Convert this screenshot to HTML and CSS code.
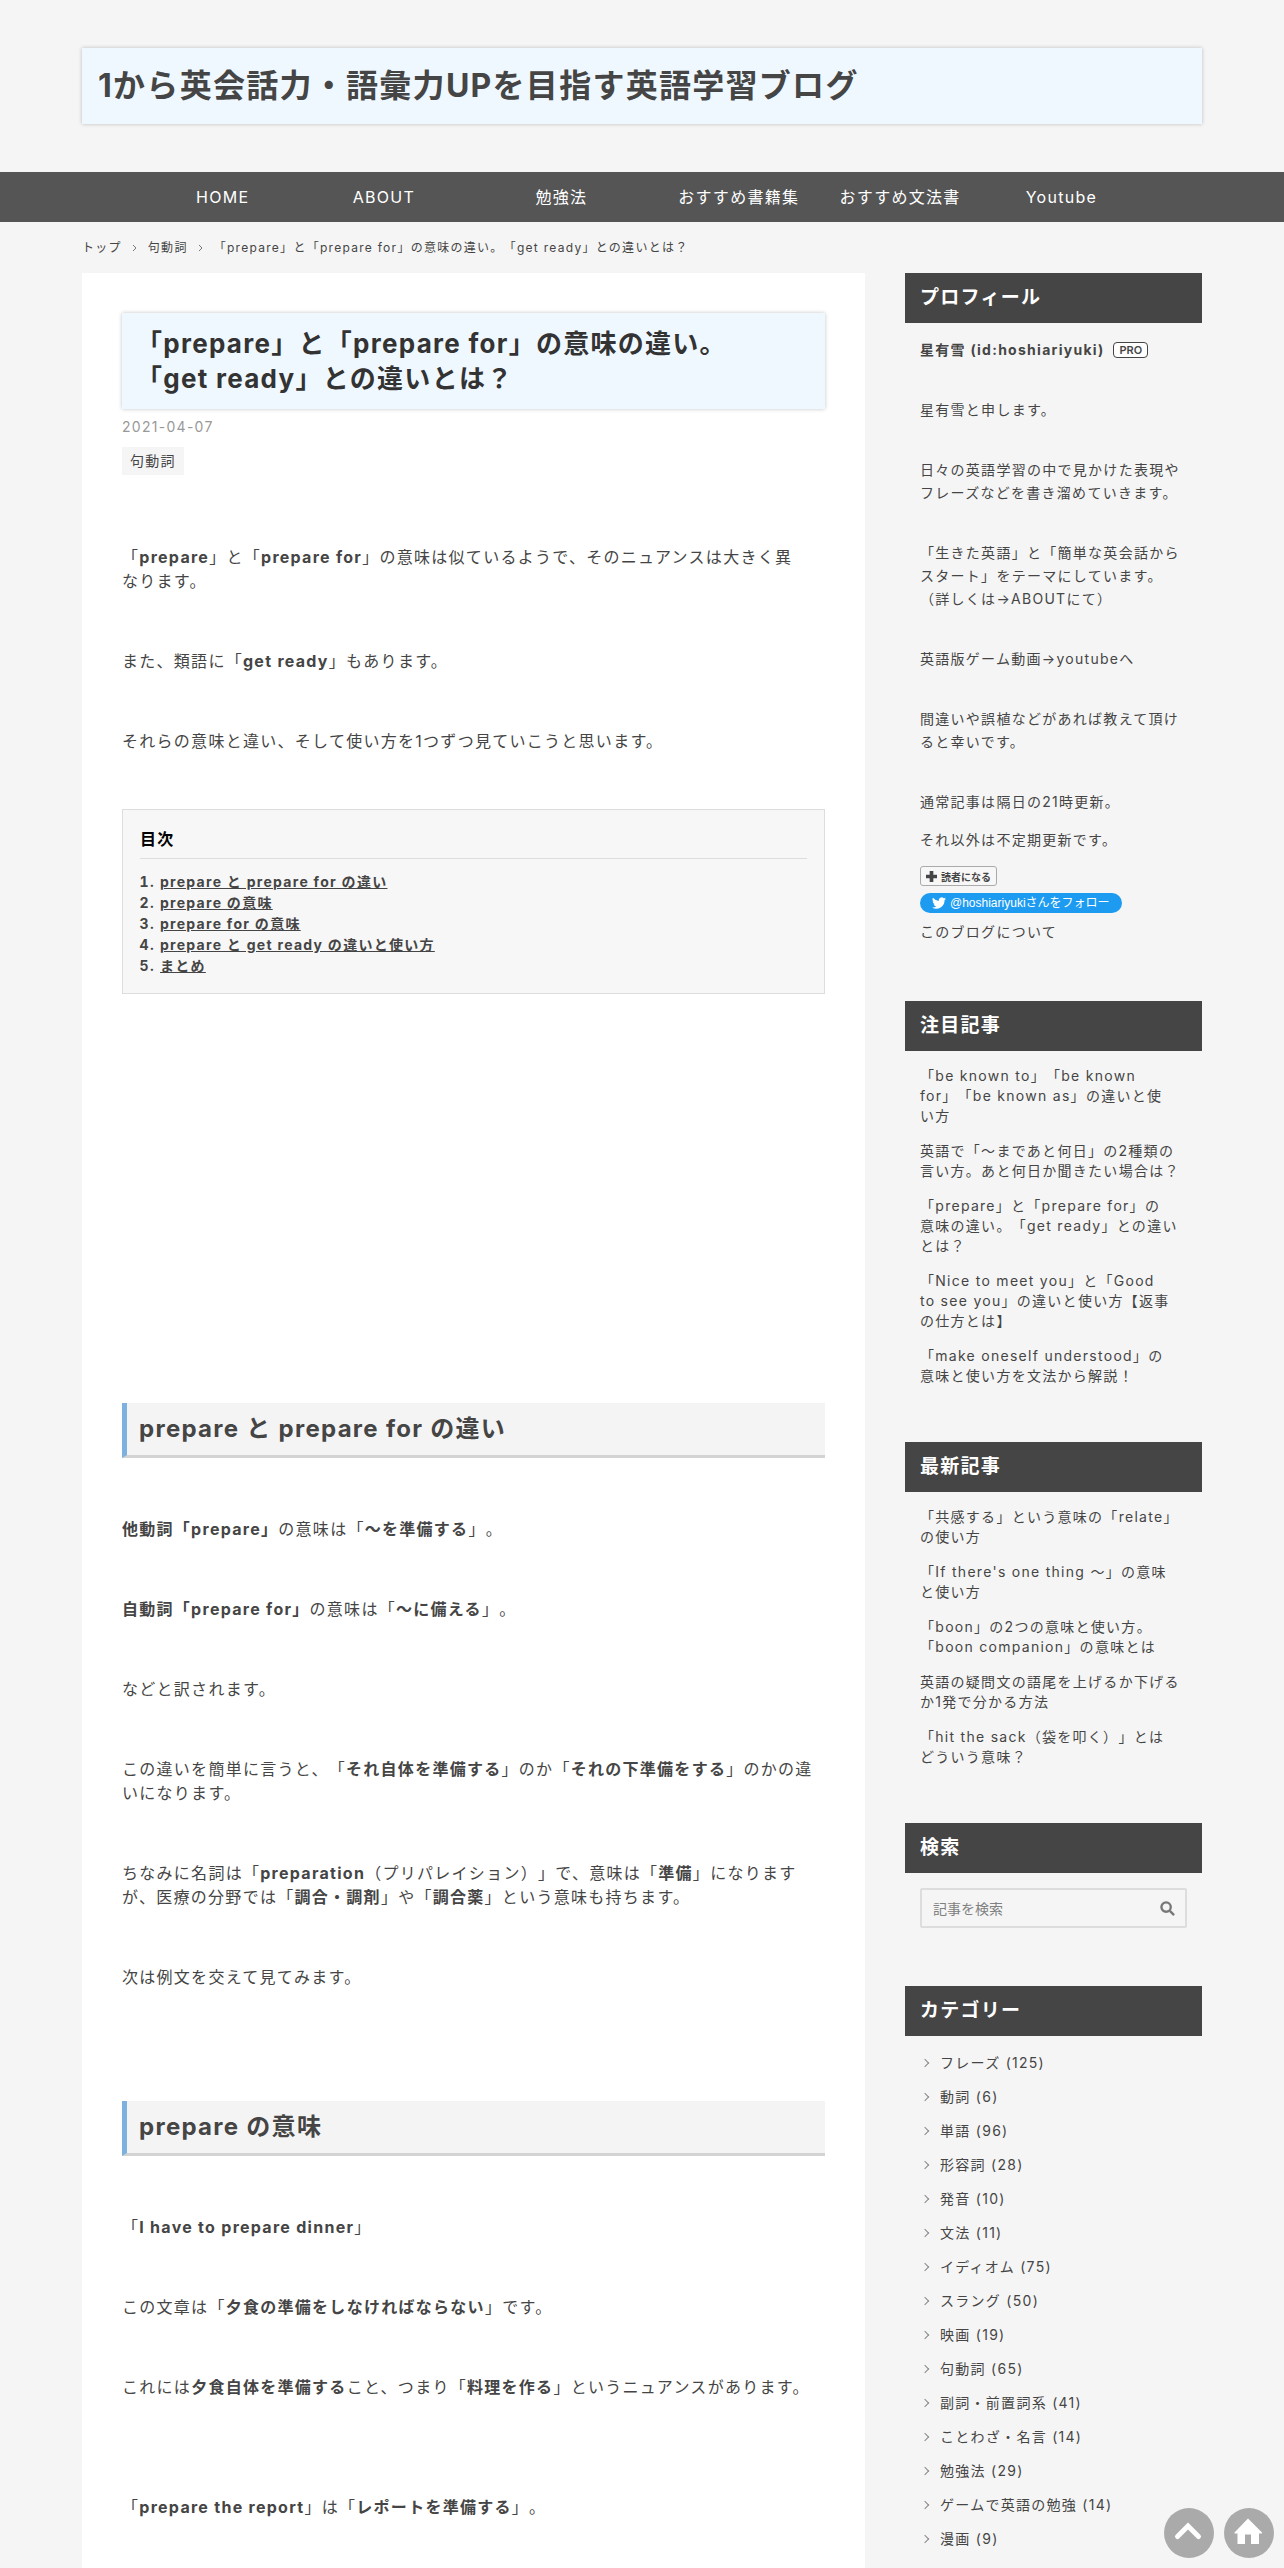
FILE: index.html
```html
<!DOCTYPE html>
<html lang="ja">
<head>
  <meta charset="UTF-8" />
  <title>「prepare」と「prepare for」の意味の違い。「get ready」との違いとは？</title>
  <meta name="viewport" content="width=device-width, initial-scale=1.0" />
  <link rel="stylesheet" href="styles.css">
</head>
<body>

<header class="blog-header">
  <div class="container">
    <div class="blog-title"><a href="#">1から英会話力・語彙力UPを目指す英語学習ブログ</a></div>
  </div>
</header>

<nav class="global-nav">
  <ul>
    <li><a href="#">HOME</a></li>
    <li><a href="#">ABOUT</a></li>
    <li class="wide"><a href="#">勉強法</a></li>
    <li><a href="#">おすすめ書籍集</a></li>
    <li><a href="#">おすすめ文法書</a></li>
    <li><a href="#">Youtube</a></li>
  </ul>
</nav>

<div class="container breadcrumb">
  <a href="#">トップ</a>
  <svg class="chevron" viewBox="0 0 6 8"><path d="M1 1l3 3-3 3" /></svg>
  <a href="#">句動詞</a>
  <svg class="chevron" viewBox="0 0 6 8"><path d="M1 1l3 3-3 3" /></svg>
  <span>「prepare」と「prepare for」の意味の違い。「get ready」との違いとは？</span>
</div>

<div class="container content">
  <main class="entry">
    <h1 class="entry-title"><a href="#">「prepare」と「prepare for」の意味の違い。<br>「get ready」との違いとは？</a></h1>
    <time class="entry-date" datetime="2021-04-07">2021-04-07</time>
    <div class="entry-categories"><a href="#">句動詞</a></div>

    <div class="entry-content">
      <p>「<strong>prepare</strong>」と「<strong>prepare for</strong>」の意味は似ているようで、そのニュアンスは大きく異<br>なります。</p>
      <p>また、類語に「<strong>get ready</strong>」もあります。</p>
      <p>それらの意味と違い、そして使い方を1つずつ見ていこうと思います。</p>

      <div class="toc">
        <p class="toc-title">目次</p>
        <ol>
          <li><a href="#s1">prepare と prepare for の違い</a></li>
          <li><a href="#s2">prepare の意味</a></li>
          <li><a href="#">prepare for の意味</a></li>
          <li><a href="#">prepare と get ready の違いと使い方</a></li>
          <li><a href="#">まとめ</a></li>
        </ol>
      </div>

      <div class="ad-space"></div>

      <h2 id="s1">prepare と prepare for の違い</h2>
      <p><strong>他動詞「prepare」</strong>の意味は「<strong>～を準備する</strong>」。</p>
      <p><strong>自動詞「prepare for」</strong>の意味は「<strong>～に備える</strong>」。</p>
      <p>などと訳されます。</p>
      <p>この違いを簡単に言うと、「<strong>それ自体を準備する</strong>」のか「<strong>それの下準備をする</strong>」のかの違いになります。</p>
      <p>ちなみに名詞は「<strong>preparation</strong>（プリパレイション）」で、意味は「<strong>準備</strong>」になりますが、医療の分野では「<strong>調合・調剤</strong>」や「<strong>調合薬</strong>」という意味も持ちます。</p>
      <p>次は例文を交えて見てみます。</p>

      <h2 id="s2">prepare の意味</h2>
      <p>「<strong>I have to prepare dinner</strong>」</p>
      <p>この文章は「<strong>夕食の準備をしなければならない</strong>」です。</p>
      <p>これには<strong>夕食自体を準備する</strong>こと、つまり「<strong>料理を作る</strong>」というニュアンスがあります。</p>
      <p class="spaced">「<strong>prepare the report</strong>」は「<strong>レポートを準備する</strong>」。</p>
    </div>
  </main>

  <aside class="sidebar">
    <section class="module">
      <h3>プロフィール</h3>
      <div class="module-body profile">
        <div class="profile-id"><a href="#">星有雪 (id:hoshiariyuki)</a><a class="pro" href="#">PRO</a></div>
        <p>星有雪と申します。</p>
        <p>日々の英語学習の中で見かけた表現やフレーズなどを書き溜めていきます。</p>
        <p>「生きた英語」と「簡単な英会話からスタート」をテーマにしています。<br>（詳しくは→<a href="#">ABOUT</a>にて）</p>
        <p>英語版ゲーム動画→<a href="#">youtube</a>へ</p>
        <p>間違いや誤植などがあれば教えて頂けると幸いです。</p>
        <p>通常記事は隔日の21時更新。</p>
        <p class="near">それ以外は不定期更新です。</p>
        <button class="subscribe" type="button"><svg viewBox="0 0 12 12"><path d="M4 0h4v4h4v4H8v4H4V8H0V4h4z" /></svg>読者になる</button>
        <a class="twitter" href="#"><svg viewBox="0 0 24 24"><path d="M24 4.6a10 10 0 0 1-2.8.8 5 5 0 0 0 2.1-2.7 10 10 0 0 1-3.1 1.2 4.9 4.9 0 0 0-8.4 4.5A14 14 0 0 1 1.7 3.1a4.9 4.9 0 0 0 1.5 6.6 5 5 0 0 1-2.2-.6v.1a4.9 4.9 0 0 0 3.9 4.8 5 5 0 0 1-2.2.1 4.9 4.9 0 0 0 4.6 3.4A9.9 9.9 0 0 1 0 19.5 14 14 0 0 0 7.5 21.7c9.1 0 14-7.5 14-14v-.6A10 10 0 0 0 24 4.6z" /></svg>@hoshiariyukiさんをフォロー</a>
        <a class="about" href="#">このブログについて</a>
      </div>
    </section>

    <section class="module">
      <h3>注目記事</h3>
      <ul class="module-body entries">
        <li><a href="#">「be known to」「be known<br>for」「be known as」の違いと使<br>い方</a></li>
        <li><a href="#">英語で「～まであと何日」の2種類の言い方。あと何日か聞きたい場合は？</a></li>
        <li><a href="#">「prepare」と「prepare for」の<br>意味の違い。「get ready」との違い<br>とは？</a></li>
        <li><a href="#">「Nice to meet you」と「Good<br>to see you」の違いと使い方【返事<br>の仕方とは】</a></li>
        <li><a href="#">「make oneself understood」の<br>意味と使い方を文法から解説！</a></li>
      </ul>
    </section>

    <section class="module">
      <h3>最新記事</h3>
      <ul class="module-body entries">
        <li><a href="#">「共感する」という意味の「relate」の使い方</a></li>
        <li><a href="#">「If there's one thing ～」の意味<br>と使い方</a></li>
        <li><a href="#">「boon」の2つの意味と使い方。<br>「boon companion」の意味とは</a></li>
        <li><a href="#">英語の疑問文の語尾を上げるか下げるか1発で分かる方法</a></li>
        <li><a href="#">「hit the sack（袋を叩く）」とは<br>どういう意味？</a></li>
      </ul>
    </section>

    <section class="module">
      <h3>検索</h3>
      <div class="module-body">
        <form class="search">
          <input type="text" placeholder="記事を検索" aria-label="記事を検索">
          <button type="submit" aria-label="検索"><svg viewBox="0 0 16 16"><circle cx="6.5" cy="6.5" r="5" /><path d="M10.5 10.5L15 15" /></svg></button>
        </form>
      </div>
    </section>

    <section class="module">
      <h3>カテゴリー</h3>
      <ul class="module-body categories">
        <li><a href="#">フレーズ (125)</a></li>
        <li><a href="#">動詞 (6)</a></li>
        <li><a href="#">単語 (96)</a></li>
        <li><a href="#">形容詞 (28)</a></li>
        <li><a href="#">発音 (10)</a></li>
        <li><a href="#">文法 (11)</a></li>
        <li><a href="#">イディオム (75)</a></li>
        <li><a href="#">スラング (50)</a></li>
        <li><a href="#">映画 (19)</a></li>
        <li><a href="#">句動詞 (65)</a></li>
        <li><a href="#">副詞・前置詞系 (41)</a></li>
        <li><a href="#">ことわざ・名言 (14)</a></li>
        <li><a href="#">勉強法 (29)</a></li>
        <li><a href="#">ゲームで英語の勉強 (14)</a></li>
        <li><a href="#">漫画 (9)</a></li>
      </ul>
    </section>
  </aside>
</div>

<div class="float-buttons">
  <a href="#" aria-label="ページトップへ"><svg viewBox="0 0 50 50"><path class="line" d="M13.5 28.5L24 18l10.500 10.500" /></svg></a>
  <a href="#" aria-label="ホームへ"><svg viewBox="0 0 50 50"><path d="M24 10.500L38 24.500q.5 1-.5 1H35V36h-8v-9.500h-6V36h-7.500V25.500H11q-1 0-.5-1z" /></svg></a>
</div>

</body>
</html>
```

FILE: styles.css
```css
* { box-sizing: border-box; }

body {
  margin: 0;
  min-height: 100vh;
  display: flex;
  flex-direction: column;
  font-family: Inter, "Noto Sans CJK JP", sans-serif;
  font-size: 16px;
  line-height: 24px;
  letter-spacing: 0.08em;
  text-spacing-trim: space-all;
  background-color: #f5f5f5;
  color: #454545;
}

a {
  color: inherit;
  text-decoration: none;
}

ul, ol {
  margin: 0;
  padding: 0;
}

ul { list-style: none; }

.container {
  width: 100%;
  max-width: 1120px;
  margin: 0 auto;
}

/* header */
.blog-header { padding: 48px 0; }

.blog-title {
  padding: 14px 16px;
  font-size: 32px;
  font-weight: bold;
  line-height: 48px;
  background: #f0f8ff;
  box-shadow: 0 0 4px rgba(0, 0, 0, 0.23);
}

.global-nav {
  background: #555;
  color: #fff;
}

.global-nav ul {
  display: flex;
  max-width: 1000px;
  margin: 0 auto;
}

.global-nav li {
  flex: 1;
  line-height: 50px;
  text-align: center;
  white-space: nowrap;
}

.global-nav .wide { flex-grow: 1.2; }

.breadcrumb {
  display: flex;
  align-items: center;
  gap: 10px;
  padding: 14px 0 13px;
  font-size: 12px;
}

.chevron {
  width: 6px;
  height: 8px;
  fill: none;
  stroke: #777;
}

.content {
  flex: 1;
  display: flex;
  gap: 40px;
}

/* entry */
.entry {
  flex: 1;
  min-width: 0;
  padding: 40px;
  background: #fff;
}

.entry-title {
  margin: 0;
  padding: 13px 14px;
  font-size: 26px;
  font-weight: bold;
  line-height: 35px;
  color: #333;
  background: #f0f8ff;
  box-shadow: 0 0 4px rgba(0, 0, 0, 0.23);
}

.entry-date {
  display: block;
  margin-top: 6px;
  font-size: 14px;
  color: #999;
}

.entry-categories {
  display: flex;
  margin-top: 8px;
  font-size: 14px;
}

.entry-categories a {
  padding: 2px 8px;
  background: #f5f5f5;
}

.entry-content {
  padding-top: 70px;
}

.entry-content p { margin: 0 0 56px; }

.entry-content h2 {
  margin: 112px 0 59px;
  padding: 8px 12px 8px;
  font-size: 24px;
  font-weight: bold;
  line-height: 36px;
  background: #f4f4f4;
  border-left: 5px solid #7db1e0;
  border-bottom: 3px solid #d3d3d3;
}

.entry-content .spaced { margin-top: 96px; }

.toc {
  padding: 17px;
  border: 1px solid #ddd;
  background: #f7f7f7;
}

.entry-content .toc-title {
  margin: 0 0 12px;
  padding-bottom: 7px;
  font-weight: bold;
  color: #000;
  border-bottom: 1px solid #ddd;
}

.toc ol {
  padding: 0 0 0 20px;
  font-size: 14px;
  font-weight: bold;
  line-height: 21px;
}

.toc a { text-decoration: underline; }

.ad-space { height: 297px; }

/* sidebar */
.sidebar {
  flex: 0 0 297px;
  font-size: 14px;
  line-height: 20px;
}

.module h3 {
  margin: 0;
  padding: 0 15px;
  font-size: 19px;
  font-weight: bold;
  line-height: 50px;
  color: #fff;
  background: #454545;
}

.module-body {
  padding: 15px 15px 58px;
}

.profile {
  line-height: 23px;
}

.profile p { margin: 37px 0 0; }

.profile .near { margin-top: 15px; }

.profile-id {
  display: flex;
  align-items: center;
  gap: 9px;
  font-weight: bold;
}

.pro {
  padding: 0 5px;
  font-size: 11px;
  line-height: 14px;
  letter-spacing: 0;
  font-weight: 600;
  border: 1px solid #454545;
  border-radius: 4px;
  background: #fff;
}

.subscribe {
  display: flex;
  align-items: center;
  gap: 4px;
  height: 20px;
  margin: 15px 0 7px;
  padding: 0 5px;
  font: 600 10px "Liberation Sans", "Noto Sans CJK JP", sans-serif;
  color: #454545;
  background: #f7f7f7;
  border: 1px solid #aaa;
  border-radius: 3px;
}

.subscribe svg {
  width: 11px;
  height: 11px;
  fill: #454545;
}

.twitter {
  display: flex;
  align-items: center;
  gap: 4px;
  width: max-content;
  padding: 0 12px;
  font: 12px/20px "Liberation Sans", "Noto Sans CJK JP", sans-serif;
  letter-spacing: 0;
  color: #fff;
  background: #1d9bf0;
  border-radius: 10px;
}

.twitter svg {
  width: 14px;
  height: 14px;
  fill: #fff;
}

.about {
  display: block;
  margin-top: 7px;
}

.entries {
  display: flex;
  flex-direction: column;
  gap: 15px;
  padding-bottom: 56px;
}

.search {
  display: flex;
  align-items: center;
  height: 40px;
  padding: 0 10px 0 11px;
  border: 2px solid #ddd;
  border-radius: 2px;
}

.search input {
  flex: 1;
  min-width: 0;
  padding: 0;
  font: 14px Inter, "Noto Sans CJK JP", sans-serif;
  color: #454545;
  background: none;
  border: none;
  outline: none;
}

.search input::placeholder { color: #808080; }

.search button {
  display: flex;
  padding: 0;
  background: none;
  border: none;
  cursor: pointer;
}

.search svg {
  width: 15px;
  height: 15px;
  fill: none;
  stroke: #777;
  stroke-width: 2.5;
}

.categories {
  display: flex;
  flex-direction: column;
  gap: 14px;
  padding-top: 17px;
  padding-bottom: 0;
}

.categories li {
  position: relative;
  padding-left: 20px;
}

.categories li::before {
  content: "";
  position: absolute;
  top: 7px;
  left: 2px;
  width: 5px;
  height: 5px;
  border: solid #888;
  border-width: 1px 1px 0 0;
  transform: rotate(45deg);
}

.float-buttons {
  position: fixed;
  right: 10px;
  bottom: 10px;
  display: flex;
  gap: 10px;
}

.float-buttons a {
  width: 50px;
  height: 50px;
  border-radius: 50%;
  background: #aaa;
}

.float-buttons svg {
  display: block;
  fill: #fff;
}

.float-buttons .line {
  fill: none;
  stroke: #fff;
  stroke-width: 5;
  stroke-linecap: round;
}
```
